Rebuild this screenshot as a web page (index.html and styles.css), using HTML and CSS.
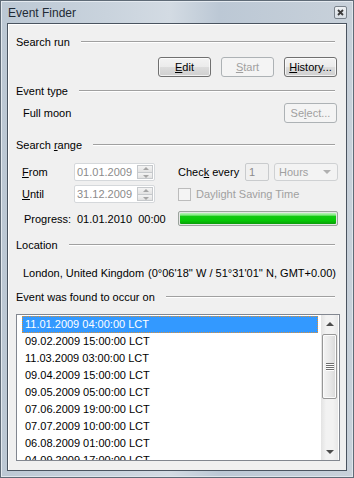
FILE: index.html
```html
<!DOCTYPE html>
<html>
<head>
<meta charset="utf-8">
<link rel="stylesheet" href="styles.css">
</head>
<body>
<div class="window">
  <div class="titlebar">
    <span class="title">Event Finder</span>
    <span class="close"><svg width="7" height="7" viewBox="0 0 7 7"><path d="M1 1 L6 6 M6 1 L1 6" stroke="#3a3a3a" stroke-width="1.8" fill="none"/></svg></span>
  </div>
  <div class="client">
    <div class="group-head"><span>Search run</span><i class="rule"></i></div>
    <div class="btn-row">
      <div class="btn"><u>E</u>dit</div>
      <div class="btn dis"><u>S</u>tart</div>
      <div class="btn"><u>H</u>istory...</div>
    </div>

    <div class="group-head g2"><span>Event type</span><i class="rule"></i></div>
    <div class="type-row">
      <span>Full moon</span>
      <div class="btn dis">Se<u>l</u>ect...</div>
    </div>

    <div class="group-head g3"><span>Search <u>r</u>ange</span><i class="rule"></i></div>
    <div class="range-row r1">
      <span class="lbl"><u>F</u>rom</span>
      <div class="datebox"><span>01.01.2009</span><span class="spin"><i class="up"></i><i class="down"></i></span></div>
      <span class="lbl2">Chec<u>k</u> every</span>
      <div class="numbox">1</div>
      <div class="combo"><span>Hours</span><i class="carr"></i></div>
    </div>
    <div class="range-row r2">
      <span class="lbl"><u>U</u>ntil</span>
      <div class="datebox"><span>31.12.2009</span><span class="spin"><i class="up"></i><i class="down"></i></span></div>
      <span class="check"></span>
      <span class="checklbl">Daylight Saving Time</span>
    </div>
    <div class="progress-row">
      <span class="plbl">Progress:</span>
      <span class="pval">01.01.2010&nbsp; 00:00</span>
      <div class="pbar"><div class="pfill"></div></div>
    </div>

    <div class="group-head g4"><span>Location</span><i class="rule"></i></div>
    <div class="loc-row">
      <span class="city">London, United Kingdom</span>
      <span>(0°06'18'' W / 51°31'01'' N, GMT+0.00)</span>
    </div>

    <div class="group-head g5"><span>Event was found to occur on</span><i class="rule"></i></div>
    <div class="listbox">
      <div class="items">
        <div class="item sel">11.01.2009 04:00:00 LCT</div>
        <div class="item">09.02.2009 15:00:00 LCT</div>
        <div class="item">11.03.2009 03:00:00 LCT</div>
        <div class="item">09.04.2009 15:00:00 LCT</div>
        <div class="item">09.05.2009 05:00:00 LCT</div>
        <div class="item">07.06.2009 19:00:00 LCT</div>
        <div class="item">07.07.2009 10:00:00 LCT</div>
        <div class="item">06.08.2009 01:00:00 LCT</div>
        <div class="item">04.09.2009 17:00:00 LCT</div>
      </div>
      <div class="vscroll">
        <div class="sarrow"><i class="tri-up"></i></div>
        <div class="track">
          <div class="thumb"><i class="grip"></i><i class="grip"></i><i class="grip"></i><i class="grip"></i></div>
        </div>
        <div class="sarrow"><i class="tri-down"></i></div>
      </div>
    </div>
  </div>
</div>
</body>
</html>
```
FILE: styles.css
```css
* { box-sizing: border-box; }
html, body { margin: 0; padding: 0; }
body {
  font-family: "Liberation Sans", Arial, sans-serif;
  font-size: 11px;
  color: #000;
  background: #c4ced8;
}
u { text-decoration: underline; text-underline-offset: 1px; }

.window {
  width: 354px;
  height: 478px;
  border: 1px solid #5f6b77;
  background: linear-gradient(to right, #bcc8d4 0%, #c9d3dd 30%, #d3dbe3 48%, #bcc8d5 62%, #c8d1da 100%);
  box-shadow: inset 1px 1px 0 #e4eaf0, inset -1px -1px 0 #dfe6ec;
  padding: 0 6px 6px 6px;
  display: flex;
  flex-direction: column;
}
.titlebar {
  height: 22px;
  display: flex;
  align-items: center;
  justify-content: space-between;
  padding-left: 1px;
  flex-shrink: 0;
}
.title {
  font-size: 12px;
  color: #1f2a35;
  margin-top: 1px;
}
.close {
  width: 13px;
  height: 13px;
  border: 1px solid #7a838c;
  border-radius: 2px;
  background: linear-gradient(#eef1f4, #d6dde4);
  display: flex;
  align-items: center;
  justify-content: center;
  margin-right: 0px;
  margin-top: 1px;
}

.client {
  width: 340px;
  height: 448px;
  border: 1px solid #4a5460;
  background: #f0f0f0;
  box-shadow: inset 1px 1px 0 #ffffff;
  padding: 10px 9px 0 8px;
  display: flex;
  flex-direction: column;
}

.group-head {
  height: 15px;
  display: flex;
  align-items: center;
  flex-shrink: 0;
  margin-right: 2px;
}
.group-head .rule {
  flex: 1;
  height: 1px;
  background: #a0a0a0;
  margin-left: 11px;
  box-shadow: 0 1px 0 #ffffff;
}
.g2 { margin-top: 6px; }
.g3 { margin-top: 14px; }
.g4 { margin-top: 11px; }
.g5 { margin-top: 9px; }

.btn-row {
  margin-top: 8px;
  height: 20px;
  display: flex;
  justify-content: flex-end;
  gap: 10px;
}
.btn {
  width: 53px;
  height: 20px;
  border: 1px solid #707070;
  border-radius: 3px;
  background: linear-gradient(#f3f3f3 0%, #ebebeb 50%, #dddddd 51%, #cfcfcf 100%);
  box-shadow: inset 0 0 0 1px rgba(255,255,255,0.7);
  display: flex;
  align-items: center;
  justify-content: center;
  flex-shrink: 0;
  color: #000;
}
.btn.dis {
  border-color: #adb2b5;
  background: #f4f4f4;
  box-shadow: none;
  color: #a0a0a0;
}

.type-row {
  margin-top: 5px;
  height: 20px;
  display: flex;
  align-items: center;
  justify-content: space-between;
  padding-left: 7px;
}

.range-row {
  height: 18px;
  display: flex;
  align-items: center;
  padding-left: 6px;
}
.r1 { margin-top: 11px; }
.r2 { margin-top: 4px; }
.lbl { width: 52px; flex-shrink: 0; }
.datebox {
  width: 81px;
  height: 18px;
  flex-shrink: 0;
  border: 1px solid #d5d8db;
  border-radius: 2px;
  background: #ffffff;
  display: flex;
  align-items: center;
  justify-content: space-between;
  padding-left: 2px;
  padding-right: 1px;
  color: #8b8b8b;
}
.spin {
  width: 16px;
  height: 14px;
  display: flex;
  flex-direction: column;
  gap: 0;
}
.spin i {
  flex: 1;
  border: 1px solid #c6c9cc;
  background: linear-gradient(#f4f4f4, #e2e2e2);
  position: relative;
}
.spin i.down { border-top: none; }
.spin i::after {
  content: "";
  position: absolute;
  left: 5px;
  width: 0; height: 0;
  border-left: 3px solid transparent;
  border-right: 3px solid transparent;
}
.spin i.up::after { top: 1px; border-bottom: 3px solid #a6a6a6; }
.spin i.down::after { top: 2px; border-top: 3px solid #a6a6a6; }

.lbl2 { margin-left: 23px; width: 67px; flex-shrink: 0; }
.numbox {
  width: 24px;
  height: 18px;
  flex-shrink: 0;
  border: 1px solid #c9cbcd;
  border-radius: 2px;
  background: #f0f0f0;
  color: #8b8b8b;
  padding-left: 3px;
  display: flex;
  align-items: center;
}
.combo {
  margin-left: 5px;
  width: 64px;
  height: 18px;
  flex-shrink: 0;
  border: 1px solid #cfd1d3;
  border-radius: 3px;
  background: #f3f3f3;
  color: #a0a0a0;
  display: flex;
  align-items: center;
  justify-content: space-between;
  padding: 0 6px 0 4px;
}
.carr {
  width: 0; height: 0;
  border-left: 4px solid transparent;
  border-right: 4px solid transparent;
  border-top: 4px solid #b0b0b0;
}
.check {
  margin-left: 23px;
  width: 13px;
  height: 13px;
  flex-shrink: 0;
  border: 1px solid #bcbcbc;
  background: #f4f4f4;
}
.checklbl { margin-left: 5px; color: #a0a0a0; }

.progress-row {
  margin-top: 8px;
  height: 15px;
  display: flex;
  align-items: center;
  padding-left: 8px;
}
.plbl { width: 53px; flex-shrink: 0; }
.pval { width: 101px; flex-shrink: 0; }
.pbar {
  width: 160px;
  height: 15px;
  flex-shrink: 0;
  border: 1px solid #9aa39c;
  border-radius: 2px;
  background: #e6e6e6;
  padding: 1px;
}
.pfill {
  height: 100%;
  border-radius: 1px;
  background: linear-gradient(#b8f5b8 0%, #7fe87f 20%, #12c912 30%, #05c705 70%, #0a9d0a 100%);
}

.loc-row {
  margin-top: 13px;
  height: 15px;
  display: flex;
  align-items: center;
  padding-left: 7px;
  white-space: nowrap;
}
.city { width: 125px; flex-shrink: 0; }

.listbox {
  margin-top: 10px;
  width: 324px;
  height: 147px;
  flex-shrink: 0;
  border: 1px solid #828790;
  background: #ffffff;
  display: flex;
}
.items {
  flex: 1;
  overflow: hidden;
  padding: 1px 3px 0 5px;
}
.item {
  height: 17px;
  line-height: 17px;
  padding-left: 3px;
  white-space: nowrap;
}
.item.sel {
  background: #3399ff;
  color: #ffffff;
  outline: 1px dotted #d9903a;
  outline-offset: -1px;
}
.vscroll {
  width: 17px;
  flex-shrink: 0;
  display: flex;
  flex-direction: column;
  background: linear-gradient(to right, #e3e3e3, #f2f2f2 30%, #f2f2f2 70%, #e8e8e8);
  margin-right: 1px;
}
.sarrow {
  height: 17px;
  flex-shrink: 0;
  display: flex;
  align-items: center;
  justify-content: center;
}
.tri-up {
  width: 0; height: 0;
  border-left: 4px solid transparent;
  border-right: 4px solid transparent;
  border-bottom: 4px solid #4d4d4d;
}
.tri-down {
  width: 0; height: 0;
  border-left: 4px solid transparent;
  border-right: 4px solid transparent;
  border-top: 4px solid #4d4d4d;
}
.track {
  flex: 1;
  padding: 2px 1px 0 1px;
}
.thumb {
  height: 65px;
  border: 1px solid #979797;
  border-radius: 2px;
  background: linear-gradient(to right, #f4f4f4, #e9e9e9 50%, #d9d9d9);
  box-shadow: inset 0 0 0 1px #fbfbfb;
  display: flex;
  flex-direction: column;
  align-items: center;
  justify-content: center;
  gap: 1px;
}
.grip {
  width: 8px;
  height: 1px;
  background: #6e6e6e;
  box-shadow: 0 1px 0 #fff;
}
```
